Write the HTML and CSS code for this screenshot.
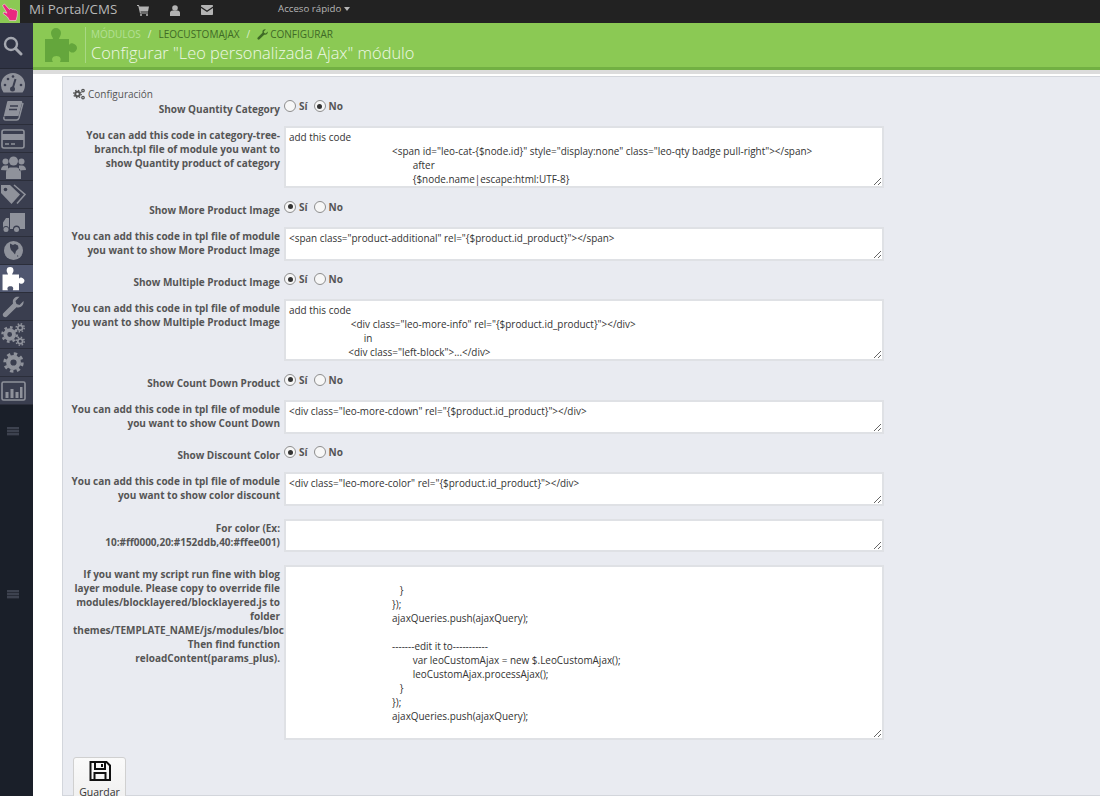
FILE: index.html
```html
<!DOCTYPE html>
<html lang="es">
<head>
<meta charset="utf-8">
<title>Configurar módulo</title>
<link rel="stylesheet" href="styles.css">
</head>
<body>
<header class="topbar">
  <div class="logo">
    <svg width="20" height="23" viewBox="0 0 20 23"><path fill="#e9287f" stroke="#f6d8e2" stroke-width=".6" d="M2.500 5.500L4.500 4l5 5.500.5-1 1.500 0 .5 1 1.500-.5.7 1 1.600-.2 1.700 1.700-.3 4.500-1.200 4.500H9.500L7.500 17 3 13.500l.8-1.500 3.200 1.200z"/></svg>
  </div>
  <span class="brand">Mi Portal/CMS</span>
  <nav class="top-icons">
    <svg class="ti" width="12" height="11" viewBox="0 0 12 11"><path fill="#b4b4b4" d="M0 0h2l.4 1.500H12l-1 5H3.500l.2 1H11v1H3L1.300 1H0z"/><circle cx="4" cy="10" r="1" fill="#b4b4b4"/><circle cx="10" cy="10" r="1" fill="#b4b4b4"/></svg>
    <svg class="ti" width="10" height="11" viewBox="0 0 10 11"><circle cx="5" cy="3" r="2.800" fill="#b4b4b4"/><path fill="#b4b4b4" d="M0 11V8c0-1.500 1-2.500 2.500-2.500h5C9 5.500 10 6.500 10 8v3z"/></svg>
    <svg class="ti" width="12" height="10" viewBox="0 0 12 10"><path fill="#b4b4b4" d="M0 1c0-.6.4-1 1-1h10c.6 0 1 .4 1 1v.6L6 5.500 0 1.600zM0 3l6 4 6-4v6c0 .6-.4 1-1 1H1c-.6 0-1-.4-1-1z"/></svg>
  </nav>
  <span class="quick">Acceso rápido<i class="caret"></i></span>
</header>
<div class="layout">
  <aside class="sidebar">
    <div class="search">
      <svg width="20" height="20" viewBox="0 0 20 20"><circle cx="8" cy="8" r="6" fill="none" stroke="currentColor" stroke-width="2.400"/><path d="M12.500 12.500L18 18" stroke="currentColor" stroke-width="3" stroke-linecap="round"/></svg>
    </div>
    <ul class="menu">
      <li><svg width="24" height="20" viewBox="0 0 24 20"><path fill="currentColor" d="M12 0a12 12 0 0 1 12 12c0 3-1 5.500-2.500 7.500h-19A12 12 0 0 1 0 12 12 12 0 0 1 12 0z"/><path stroke="#3a3e4f" stroke-width="2" d="M11.500 16L14.500 6"/><circle cx="11.500" cy="16" r="2.500" fill="#3a3e4f"/><circle cx="4" cy="12" r="1.300" fill="#3a3e4f"/><circle cx="7" cy="6" r="1.300" fill="#3a3e4f"/><circle cx="12" cy="3.500" r="1.300" fill="#3a3e4f"/><circle cx="20" cy="12" r="1.300" fill="#3a3e4f"/></svg></li>
      <li><svg width="22" height="22" viewBox="0 0 22 22"><path fill="none" stroke="currentColor" stroke-width="1.500" d="M21 3l-4 15c-.3 1-1 2-2.500 2H4c-2 0-2.500-1.500-2-3"/><path fill="currentColor" d="M6 1h13c1 0 1.500.6 1.200 1.500L16.500 16H4c-1.500 0-2.500 1-2.500 1L5 2.500C5.200 1.500 5.500 1 6 1z"/><path stroke="#3a3e4f" stroke-width="1.300" d="M8 6h8M7 9.500h8"/></svg></li>
      <li><svg width="24" height="20" viewBox="0 0 24 20"><rect x="1" y="1" width="22" height="18" rx="2" fill="none" stroke="currentColor" stroke-width="1.600"/><rect x="1" y="5" width="22" height="6" fill="currentColor"/><path stroke="currentColor" stroke-width="1.500" d="M4 15h4M10 15h4"/></svg></li>
      <li><svg width="25" height="24" viewBox="0 0 25 24"><circle cx="4.500" cy="6.500" r="3" fill="currentColor"/><circle cx="20.500" cy="6.500" r="3" fill="currentColor"/><circle cx="12.500" cy="6" r="4.500" fill="currentColor"/><path fill="currentColor" d="M0 15c0-3 2-4.500 4-4.500h3v5zM25 15c0-3-2-4.500-4-4.500h-3v5zM5 24v-6c0-4 3-5.500 5-5.500h5c2 0 5 1.500 5 5.500v6z"/></svg></li>
      <li><svg width="25" height="21" viewBox="0 0 25 21"><path fill="currentColor" d="M0 1h9l10 9.500-8.500 9.500L0 9z"/><path fill="none" stroke="currentColor" stroke-width="1.600" d="M13 1l11 9.500-8 9"/><circle cx="4.500" cy="5.500" r="1.800" fill="#3a3e4f"/></svg></li>
      <li><svg width="23" height="20" viewBox="0 0 23 20"><path fill="currentColor" d="M8 0h15v16h-5a3.500 3.500 0 0 0-7 0H8z"/><path fill="currentColor" d="M1 9.500L4 5h3v11H7a3 3 0 0 0-6 0z"/><circle cx="4" cy="16.500" r="2.500" fill="currentColor"/><circle cx="14.500" cy="16.500" r="2.500" fill="currentColor"/></svg></li>
      <li><svg width="21" height="21" viewBox="0 0 21 21"><circle cx="10.500" cy="10.500" r="9.500" fill="currentColor"/><path fill="#3a3e4f" d="M7 3.500l3 1.500 2-1 3 1.500.5 3-2.500 2.500-1 3.500-2-2.500-2-2-1-3zM14 15l1.500 1-1 1z"/></svg></li>
      <li class="active"><svg width="23" height="24" viewBox="0 0 32 35"><path fill="currentColor" d="M0 11h8c0-2-2-3-2-6a5 5 0 0 1 10 0c0 3-2 4-2 6h10v6c1-1.500 2.500-2 4-1.500 2.500.5 4 2.500 4 4.500s-2 4.500-4 4.500c-1.500.3-3-.5-4-1.500V34H15c1.500-3 .5-6-3.500-6S6 31 8 34H0z"/></svg></li>
      <li><svg width="22" height="22" viewBox="0 0 22 22"><path fill="currentColor" d="M21.500 5c.7 4-2.500 7.500-7 6.300L5 20.500c-1 1-2.500 1-3.500 0s-1-2.500 0-3.500l9.500-9.500C10 3 13 0 17.500.8L13.500 5l1 3 3 1z"/></svg></li>
      <li><svg width="25" height="23" viewBox="0 0 26 24"><g fill="none" stroke="currentColor"><circle cx="9" cy="12" r="4.500" stroke-width="4"/><circle cx="9" cy="12" r="7.500" stroke-width="2.600" stroke-dasharray="2.800 3.100"/><circle cx="20" cy="5" r="2.500" stroke-width="1.800"/><circle cx="20" cy="5" r="4.200" stroke-width="1.600" stroke-dasharray="1.600 1.700"/><circle cx="20" cy="19" r="2.500" stroke-width="1.800"/><circle cx="20" cy="19" r="4.200" stroke-width="1.600" stroke-dasharray="1.600 1.700"/></g></svg></li>
      <li><svg width="21" height="21" viewBox="0 0 22 22"><g fill="none" stroke="currentColor"><circle cx="11" cy="11" r="5.500" stroke-width="4.500"/><circle cx="11" cy="11" r="9" stroke-width="3.400" stroke-dasharray="3.500 3.570"/></g></svg></li>
      <li><svg width="25" height="20" viewBox="0 0 25 20"><rect x="1" y="1" width="23" height="18" rx="1.500" fill="none" stroke="currentColor" stroke-width="1.600"/><path fill="currentColor" d="M4.500 11h3v6h-3zM9.500 8h3v9h-3zM14.500 11h3v6h-3zM19 6h2.500v11H19z"/></svg></li>
    </ul>
    <div class="collapse first"><i></i></div>
    <div class="collapse second"><i></i></div>
  </aside>
  <main class="main">
    <div class="page-head">
      <svg class="puzzle" width="32" height="35" viewBox="0 0 32 35"><path fill="#64a63c" d="M0 11h8c0-2-2-3-2-6a5 5 0 0 1 10 0c0 3-2 4-2 6h10v6c1-1.500 2.500-2 4-1.500 2.500.5 4 2.500 4 4.500s-2 4.500-4 4.500c-1.500.3-3-.5-4-1.500V34H15c1.500-3 .5-6-3.500-6S6 31 8 34H0z"/></svg>
      <div class="head-text">
        <div class="crumbs"><span class="dim">Módulos</span><span class="sep">/</span><span>LeoCustomAjax</span><span class="sep">/</span><svg width="11" height="11" viewBox="0 0 22 22"><path fill="#3f6a26" d="M21.500 5c.7 4-2.500 7.500-7 6.300L5 20.500c-1 1-2.500 1-3.500 0s-1-2.500 0-3.500l9.500-9.500C10 3 13 0 17.500.8L13.500 5l1 3 3 1z"/></svg><span class="cfg">Configurar</span></div>
        <h1>Configurar "Leo personalizada Ajax" módulo</h1>
      </div>
    </div>
    <div class="strip"></div>
    <div class="content">
      <form class="panel">
        <div class="panel-title">
          <svg width="13" height="12" viewBox="0 0 26 24"><g fill="none" stroke="#555"><circle cx="9" cy="12" r="4.500" stroke-width="4"/><circle cx="9" cy="12" r="7.500" stroke-width="2.600" stroke-dasharray="2.800 3.100"/><circle cx="20" cy="5" r="2.500" stroke-width="2.500"/><circle cx="20" cy="19" r="2.500" stroke-width="2.500"/></g></svg>
          <span>Configuración</span>
        </div>
        <div class="row switch first-row">
          <label class="lbl">Show Quantity Category</label>
          <div class="ctl"><span class="radio"></span><b>Sí</b><span class="radio on"></span><b>No</b></div>
        </div>
        <div class="row">
          <label class="lbl">You can add this code in category-tree-<br>branch.tpl file of module you want to<br>show Quantity product of category</label>
          <textarea class="ta h62" spellcheck="false">add this code
                                        &lt;span id="leo-cat-{$node.id}" style="display:none" class="leo-qty badge pull-right"&gt;&lt;/span&gt;
                                                after
                                                {$node.name|escape:html:UTF-8}</textarea>
        </div>
        <div class="row switch">
          <label class="lbl">Show More Product Image</label>
          <div class="ctl"><span class="radio on"></span><b>Sí</b><span class="radio"></span><b>No</b></div>
        </div>
        <div class="row">
          <label class="lbl">You can add this code in tpl file of module you want to show More Product Image</label>
          <textarea class="ta h34" spellcheck="false">&lt;span class="product-additional" rel="{$product.id_product}"&gt;&lt;/span&gt;</textarea>
        </div>
        <div class="row switch">
          <label class="lbl">Show Multiple Product Image</label>
          <div class="ctl"><span class="radio on"></span><b>Sí</b><span class="radio"></span><b>No</b></div>
        </div>
        <div class="row">
          <label class="lbl">You can add this code in tpl file of module you want to show Multiple Product Image</label>
          <textarea class="ta h62" spellcheck="false">add this code
                        &lt;div class="leo-more-info" rel="{$product.id_product}"&gt;&lt;/div&gt;
                             in
                       &lt;div class="left-block"&gt;...&lt;/div&gt;</textarea>
        </div>
        <div class="row switch">
          <label class="lbl">Show Count Down Product</label>
          <div class="ctl"><span class="radio on"></span><b>Sí</b><span class="radio"></span><b>No</b></div>
        </div>
        <div class="row">
          <label class="lbl">You can add this code in tpl file of module you want to show Count Down</label>
          <textarea class="ta h34" spellcheck="false">&lt;div class="leo-more-cdown" rel="{$product.id_product}"&gt;&lt;/div&gt;</textarea>
        </div>
        <div class="row switch">
          <label class="lbl">Show Discount Color</label>
          <div class="ctl"><span class="radio on"></span><b>Sí</b><span class="radio"></span><b>No</b></div>
        </div>
        <div class="row">
          <label class="lbl">You can add this code in tpl file of module you want to show color discount</label>
          <textarea class="ta h34" spellcheck="false">&lt;div class="leo-more-color" rel="{$product.id_product}"&gt;&lt;/div&gt;</textarea>
        </div>
        <div class="row tight">
          <label class="lbl">For color (Ex: 10:#ff0000,20:#152ddb,40:#ffee001)</label>
          <textarea class="ta h33" spellcheck="false"></textarea>
        </div>
        <div class="row tight">
          <label class="lbl">If you want my script run fine with blog layer module. Please copy to override file modules/blocklayered/blocklayered.js to folder <span class="over">themes/TEMPLATE_NAME/js/modules/blocklayered</span> Then find function reloadContent(params_plus).</label>
          <textarea class="ta h175" spellcheck="false">

                                           }
                                        });
                                        ajaxQueries.push(ajaxQuery);

                                        -------edit it to-----------
                                                var leoCustomAjax = new $.LeoCustomAjax();
                                                leoCustomAjax.processAjax();
                                           }
                                        });
                                        ajaxQueries.push(ajaxQuery);</textarea>
        </div>
        <button class="save" type="button">
          <svg width="22" height="20" viewBox="0 0 22 20"><path fill="none" stroke="#111" stroke-width="2" d="M1.500 1h16l3.500 3.500V19H1.500z"/><path fill="none" stroke="#111" stroke-width="2" d="M6 1.500V8h10V1.500M5.500 18.500V12h11v6.500"/><path stroke="#111" stroke-width="2" d="M13 3v3"/></svg>
          <span>Guardar</span>
        </button>
      </form>
    </div>
  </main>
</div>
</body>
</html>
```
FILE: styles.css
```css
* { box-sizing: border-box; }
html, body { margin: 0; height: 796px; overflow: hidden; }
body { font-family: "Open Sans", sans-serif; background: #fff; color: #555; }

.topbar { height: 23px; background: #222; display: flex; align-items: center; color: #c5c5c5; }
.logo { width: 20px; height: 23px; background: #8bc954; display: flex; align-items: center; justify-content: center; }
.brand { margin-left: 9px; font-size: 13.300px; color: #b8b8b8; width: 108px; margin-top: -6px; }
.top-icons { display: flex; align-items: center; gap: 21px; width: 141px; margin-top: -3px; }
.ti { display: block; }
.quick { font-size: 9.700px; color: #b5b5b5; margin-top: -6px; display: flex; align-items: center; }
.caret { margin-left: 3px; border: 3.500px solid transparent; border-top: 4px solid #b5b5b5; border-bottom: 0; }

.layout { display: flex; height: 773px; }
.sidebar { width: 33px; flex: none; background: #1a1f29; }
.search { height: 46px; background: #2f3344; color: #a5a8b0; display: flex; align-items: center; justify-content: center; padding-right: 7px; border-bottom: 1px solid #242733; }
.menu { list-style: none; margin: 0; padding: 0; background: #3a3e4f; color: #8f929b; }
.menu li { height: 28px; display: flex; align-items: center; justify-content: center; border-bottom: 1px solid #2b2e3a; padding-right: 7px; }
.menu li.active { background: #4f566f; color: #fff; }
.collapse { display: flex; justify-content: center; padding-right: 7px; }
.collapse i { width: 12px; height: 9px; background: repeating-linear-gradient(#3d424f 0 2px, #272b36 2px 3px); }
.collapse.first { margin-top: 22px; }
.collapse.second { margin-top: 154px; }

.main { flex: 1; min-width: 0; display: flex; flex-direction: column; }
.page-head { height: 47px; background: #8bc954; border-bottom: 3px solid #72b043; display: flex; align-items: center; padding-left: 12px; flex: none; }
.puzzle { display: block; }
.head-text { margin-left: 8px; border-left: 1px solid #a8d884; height: 36px; padding-left: 5px; }
.crumbs { font-size: 10px; line-height: 14px; text-transform: uppercase; color: #3f6a26; display: flex; align-items: center; }
.crumbs .dim { color: #b4e094; }
.crumbs .sep { margin: 0 7px; color: #dcefcc; }
.crumbs .cfg { margin-left: 2px; }
h1 { margin: 0; font-size: 16.400px; font-weight: 300; line-height: 24px; color: #eef8e6; white-space: nowrap; }
.strip { height: 4px; background: #dcdcdc; flex: none; }

.content { flex: 1; min-height: 0; padding: 2px 0 0 29px; }
.panel { height: 100%; background: #e9ebf1; border: 1px solid #d3d6dc; border-right: 0; padding: 9px 0 0 7px; }
.panel-title { display: flex; align-items: center; gap: 2px; padding-left: 3px; font-size: 10px; line-height: 14px; color: #555; height: 15px; }
.row { display: flex; align-items: flex-start; width: 814px; margin-bottom: 12.500px; }
.row.switch { margin-bottom: 0; height: 26px; }
.row.first-row { margin-top: -1px; margin-bottom: 10px; height: 16px; }
.row.tight { margin-bottom: 13px; }
.lbl { width: 210px; flex: none; text-align: right; font-size: 10px; font-weight: 700; line-height: 14px; color: #555; margin-top: 2px; }
.over { display: block; width: 212px; margin-left: 3px; white-space: nowrap; overflow: hidden; text-align: left; }
.ctl { display: flex; align-items: center; margin-left: 4px; font-size: 10px; height: 14px; margin-top: -1px; }
.ctl b { margin-left: 3px; margin-right: 6px; font-weight: 700; }
.radio { width: 12px; height: 12px; border-radius: 50%; background: #f7f7f7; border: 1px solid #8d8d8d; position: relative; }
.radio.on::after { content: ""; position: absolute; inset: 2.500px; border-radius: 50%; background: #333; }
.ta { display: block; margin: 0 0 0 4px; width: 600px; background: #fff; border: 2px solid #dfe1e5; padding: 2px 3px; font-family: "Open Sans", sans-serif; font-size: 9.930px; line-height: 14px; color: #333; resize: vertical; white-space: pre; overflow: hidden; outline: 0; }
.h62 { height: 62px; }
.h34 { height: 34px; }
.h33 { height: 33px; }
.h175 { height: 175px; }
.save { display: flex; flex-direction: column; align-items: center; width: 53px; height: 60px; margin: 17px 0 0 3px; padding: 3px 0 0; background: linear-gradient(#fafafa, #ececec); border: 1px solid #d0d0d0; border-radius: 3px; font-family: "Open Sans", sans-serif; font-size: 10.500px; color: #333; }
.save span { margin-top: 4px; line-height: 14px; }
```
